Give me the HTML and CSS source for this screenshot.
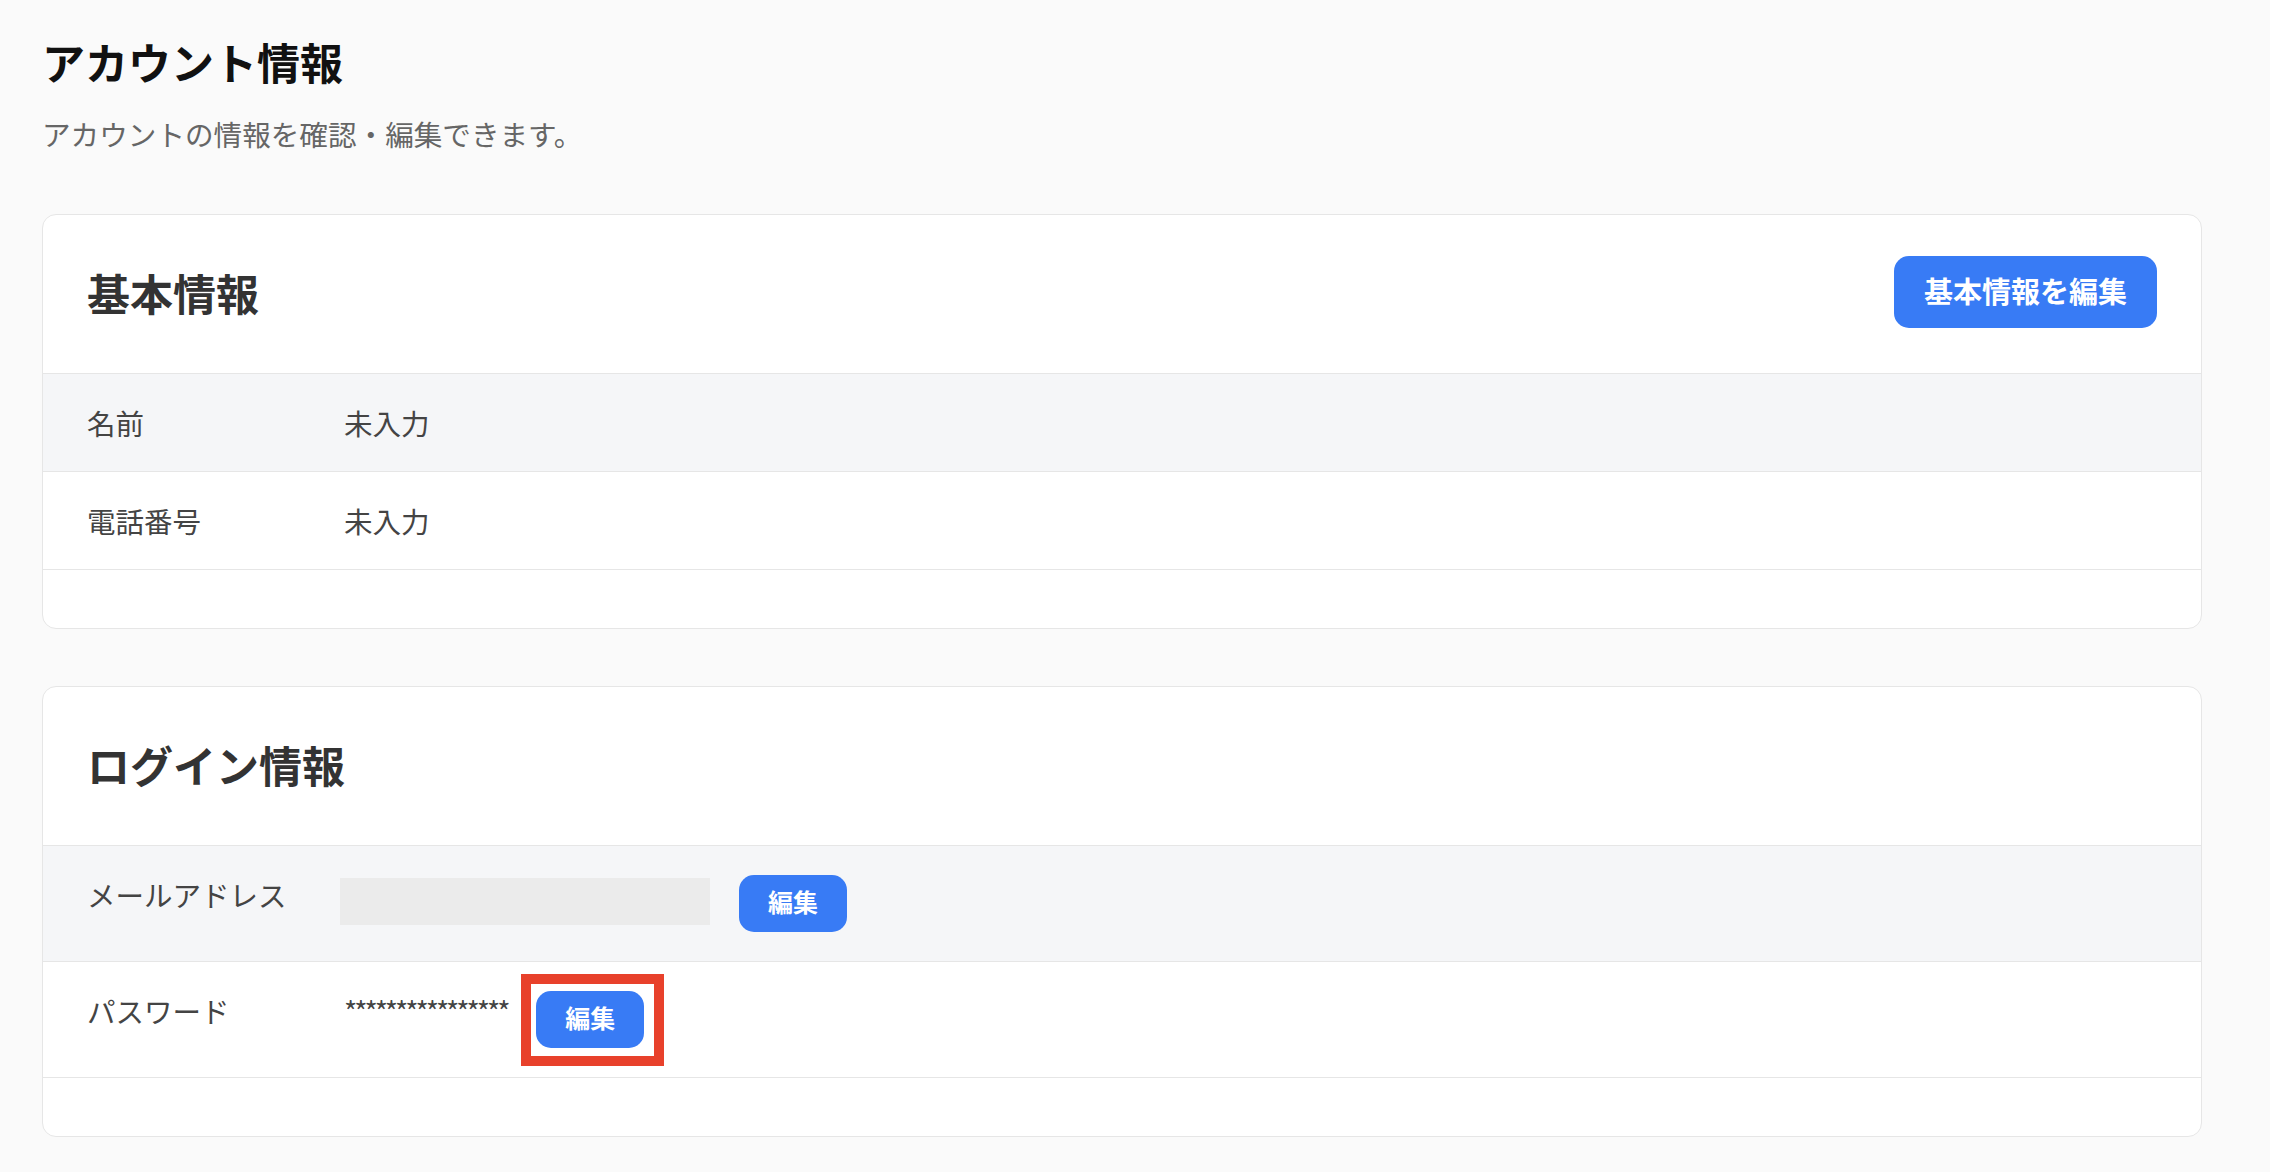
FILE: index.html
```html
<!DOCTYPE html>
<html lang="ja">
<head>
<meta charset="utf-8">
<title>アカウント情報</title>
<link rel="stylesheet" href="styles.css">
</head>
<body>
<main class="page">
  <h1 class="page-title">アカウント情報</h1>
  <p class="page-subtitle">アカウントの情報を確認・編集できます。</p>

  <section class="card">
    <div class="card-header">
      <h2 class="card-title">基本情報</h2>
      <button class="btn btn-lg" type="button">基本情報を編集</button>
    </div>
    <div class="row row-alt">
      <div class="row-label">名前</div>
      <div class="row-value"><span class="value-text">未入力</span></div>
    </div>
    <div class="row">
      <div class="row-label">電話番号</div>
      <div class="row-value"><span class="value-text">未入力</span></div>
    </div>
  </section>

  <section class="card card-second">
    <div class="card-header">
      <h2 class="card-title">ログイン情報</h2>
    </div>
    <div class="row row-alt">
      <div class="row-label">メールアドレス</div>
      <div class="row-value">
        <div class="email-box"></div>
        <button class="btn btn-sm" type="button">編集</button>
      </div>
    </div>
    <div class="row">
      <div class="row-label">パスワード</div>
      <div class="row-value">
        <span class="value-text masked">****************</span>
        <div class="highlight-wrap">
          <button class="btn btn-sm" type="button">編集</button>
          <span class="highlight" aria-hidden="true"></span>
        </div>
      </div>
    </div>
  </section>
</main>
</body>
</html>
```

FILE: styles.css
```css
* {
  box-sizing: border-box;
}

html,
body {
  margin: 0;
  padding: 0;
  background: #fafafa;
}

body {
  font-family: "Noto Sans CJK JP", "Noto Sans", sans-serif;
  color: #444;
}

.page {
  padding: 31px 68px 0 42px;
}

.page-title {
  margin: 0;
  font-size: 43px;
  line-height: 60px;
  font-weight: 700;
  color: #111;
}

.page-subtitle {
  margin: 23px 0 0;
  font-size: 28.6px;
  line-height: 40px;
  color: #666;
}

.card {
  margin-top: 60px;
  background: #fff;
  border: 1px solid #e6e6e6;
  border-radius: 14px;
  padding-bottom: 58px;
}

.card-second {
  margin-top: 57px;
}

.card-header {
  height: 159px;
  display: flex;
  align-items: center;
  justify-content: space-between;
  padding: 0 44px 4px;
  border-bottom: 1px solid #e6e6e6;
}

.card-title {
  margin: 0;
  font-size: 43px;
  line-height: 60px;
  font-weight: 700;
  color: #333;
}

.row {
  display: flex;
  align-items: flex-start;
  padding: 29px 44px;
  border-bottom: 1px solid #e6e6e6;
}

.row-alt {
  background: #f5f6f8;
}

.row-label {
  flex: none;
  width: 253px;
  font-size: 28.5px;
  line-height: 39px;
  color: #444;
}

.row-value {
  display: flex;
  align-items: flex-start;
}

.value-text {
  margin-left: 4px;
  font-size: 28.5px;
  line-height: 39px;
  color: #444;
}

.masked {
  letter-spacing: -3.1px;
}

.email-box {
  width: 370px;
  height: 47px;
  margin-top: 3px;
  background: #ebebeb;
}

.btn {
  border: 0;
  margin: 0;
  font-family: "Noto Sans CJK JP", "Noto Sans", sans-serif;
  font-weight: 700;
  color: #fff;
  background: #387bf5;
  cursor: pointer;
  display: flex;
  align-items: center;
  justify-content: center;
}

.btn-lg {
  height: 72px;
  padding: 0 30px 5px;
  font-size: 29px;
  border-radius: 15px;
}

.btn-sm {
  width: 108px;
  height: 57px;
  padding: 0 0 5px;
  font-size: 25px;
  border-radius: 15px;
  margin-left: 29px;
}

.highlight-wrap {
  position: relative;
}

.highlight {
  position: absolute;
  left: 14px;
  top: -17px;
  width: 143px;
  height: 92px;
  border: 10px solid #e8412b;
  pointer-events: none;
}
```
